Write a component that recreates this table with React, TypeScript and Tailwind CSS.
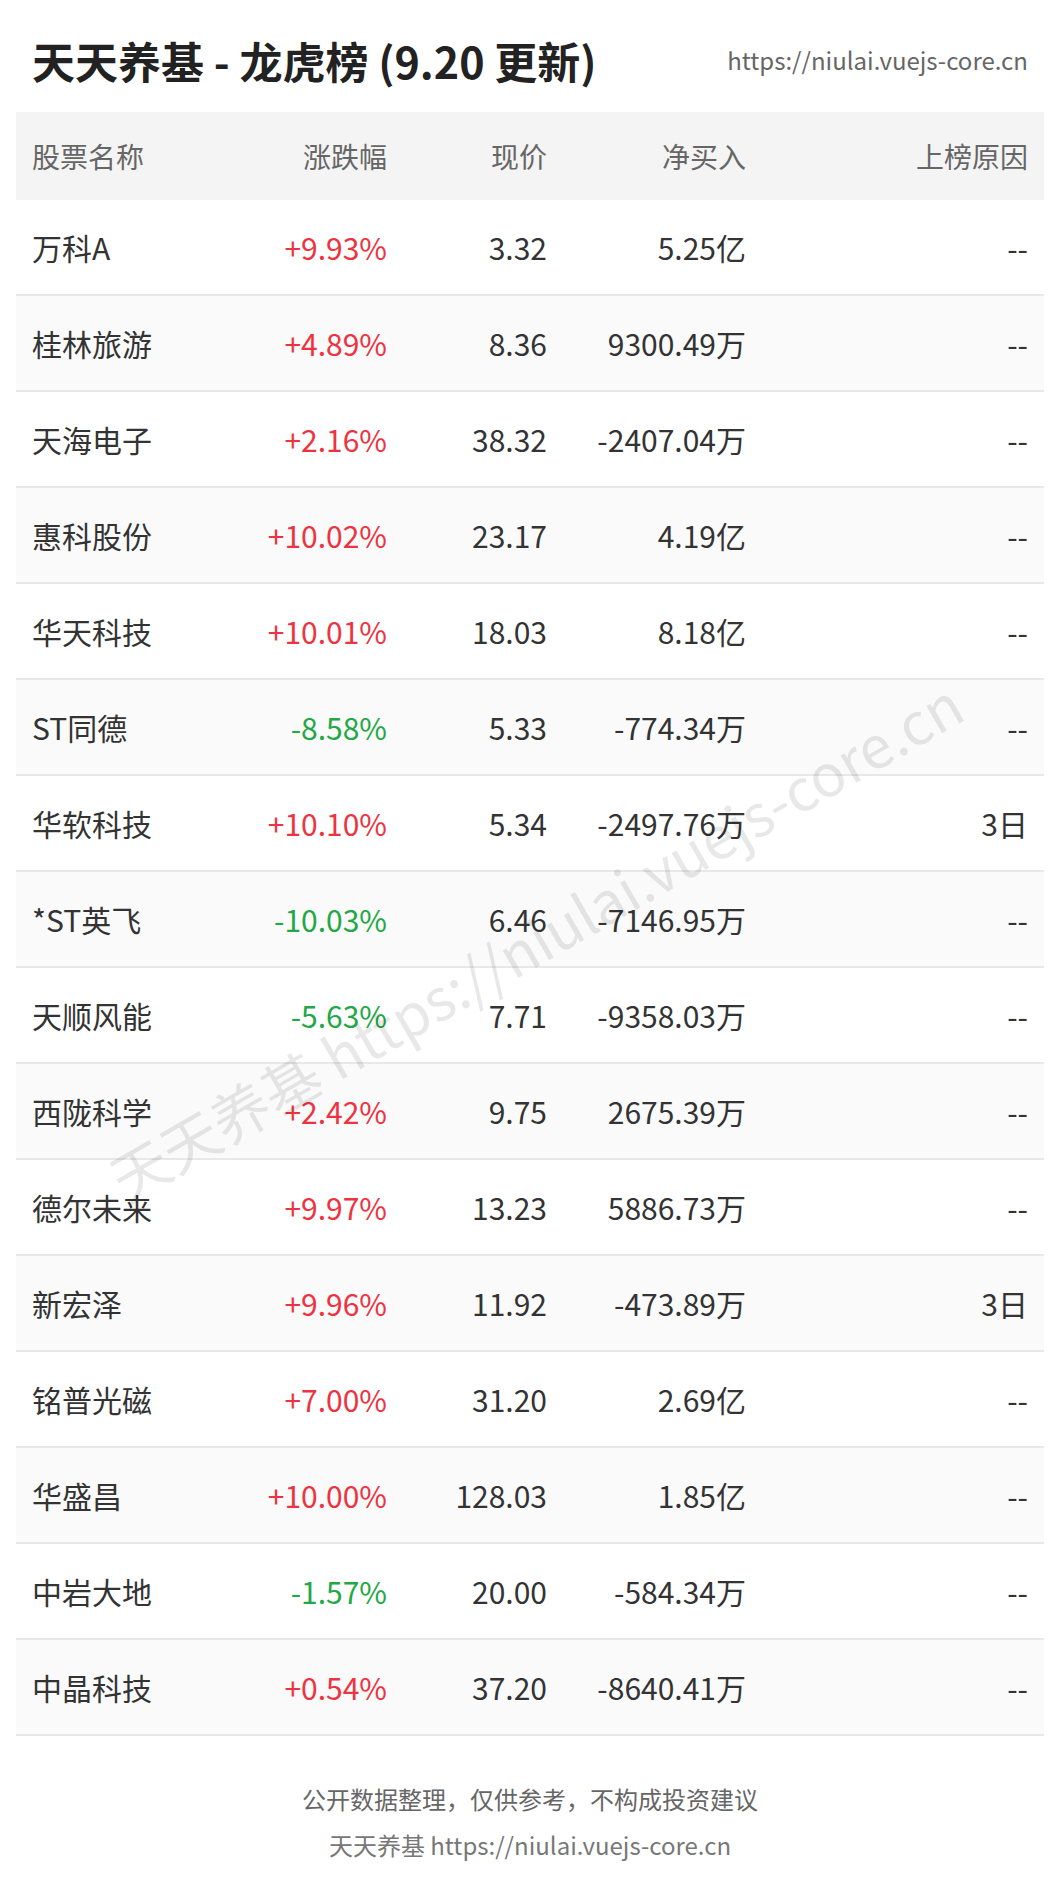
const rows: [string, string, string, string, string][] = [
  ["万科A", "+9.93%", "3.32", "5.25亿", "--"],
  ["桂林旅游", "+4.89%", "8.36", "9300.49万", "--"],
  ["天海电子", "+2.16%", "38.32", "-2407.04万", "--"],
  ["惠科股份", "+10.02%", "23.17", "4.19亿", "--"],
  ["华天科技", "+10.01%", "18.03", "8.18亿", "--"],
  ["ST同德", "-8.58%", "5.33", "-774.34万", "--"],
  ["华软科技", "+10.10%", "5.34", "-2497.76万", "3日"],
  ["*ST英飞", "-10.03%", "6.46", "-7146.95万", "--"],
  ["天顺风能", "-5.63%", "7.71", "-9358.03万", "--"],
  ["西陇科学", "+2.42%", "9.75", "2675.39万", "--"],
  ["德尔未来", "+9.97%", "13.23", "5886.73万", "--"],
  ["新宏泽", "+9.96%", "11.92", "-473.89万", "3日"],
  ["铭普光磁", "+7.00%", "31.20", "2.69亿", "--"],
  ["华盛昌", "+10.00%", "128.03", "1.85亿", "--"],
  ["中岩大地", "-1.57%", "20.00", "-584.34万", "--"],
  ["中晶科技", "+0.54%", "37.20", "-8640.41万", "--"],
];

const cols = "grid grid-cols-[200px_187px_160px_199px_282px]";

export default function App() {
  return (
    <div
      className="relative w-[1060px] h-[1884px] overflow-hidden bg-white"
      style={{ fontFamily: '"Noto Sans CJK SC", "Noto Sans", sans-serif' }}
    >
      {/* title bar */}
      <div className="flex items-center justify-between px-8 pt-[27px] pb-[19px]">
        <h1 className="text-[43px] leading-[66px] font-bold text-[#222]">天天养基 - 龙虎榜 (9.20 更新)</h1>
        <span className="text-[24px] leading-[36px] text-[#666]">https://niulai.vuejs-core.cn</span>
      </div>

      <div className="mx-4">
        <div className={`${cols} h-[88px] items-center bg-[#f4f4f4] text-[28px] text-[#666]`}>
          <div className="pl-4">股票名称</div>
          <div className="pr-4 text-right">涨跌幅</div>
          <div className="pr-4 text-right">现价</div>
          <div className="pr-4 text-right">净买入</div>
          <div className="pr-4 text-right">上榜原因</div>
        </div>
        {rows.map((r, i) => {
          const up = r[1].startsWith("+");
          return (
            <div
              key={r[0]}
              className={`${cols} h-[96px] items-center border-b-2 border-[#e8e8e8] text-[30px] text-[#333] ${
                i % 2 === 1 ? "bg-[#fafafa]" : "bg-white"
              }`}
            >
              <div className="pl-4">{r[0]}</div>
              <div className={`pr-4 text-right ${up ? "text-[#ee3340]" : "text-[#22a844]"}`}>{r[1]}</div>
              <div className="pr-4 text-right">{r[2]}</div>
              <div className="pr-4 text-right">{r[3]}</div>
              <div className="pr-4 text-right">{r[4]}</div>
            </div>
          );
        })}
      </div>

      <div className="mt-[40px] text-center text-[24px] leading-[46px] text-[#666]">
        <p>公开数据整理，仅供参考，不构成投资建议</p>
        <p className="text-[#777]">天天养基 https://niulai.vuejs-core.cn</p>
      </div>

      {/* watermark */}
      <div className="pointer-events-none absolute left-[535px] top-[940px] -translate-x-1/2 -translate-y-1/2 -rotate-30 whitespace-nowrap text-[58px] text-black/[0.09]">
        天天养基 https://niulai.vuejs-core.cn
      </div>
    </div>
  );
}
